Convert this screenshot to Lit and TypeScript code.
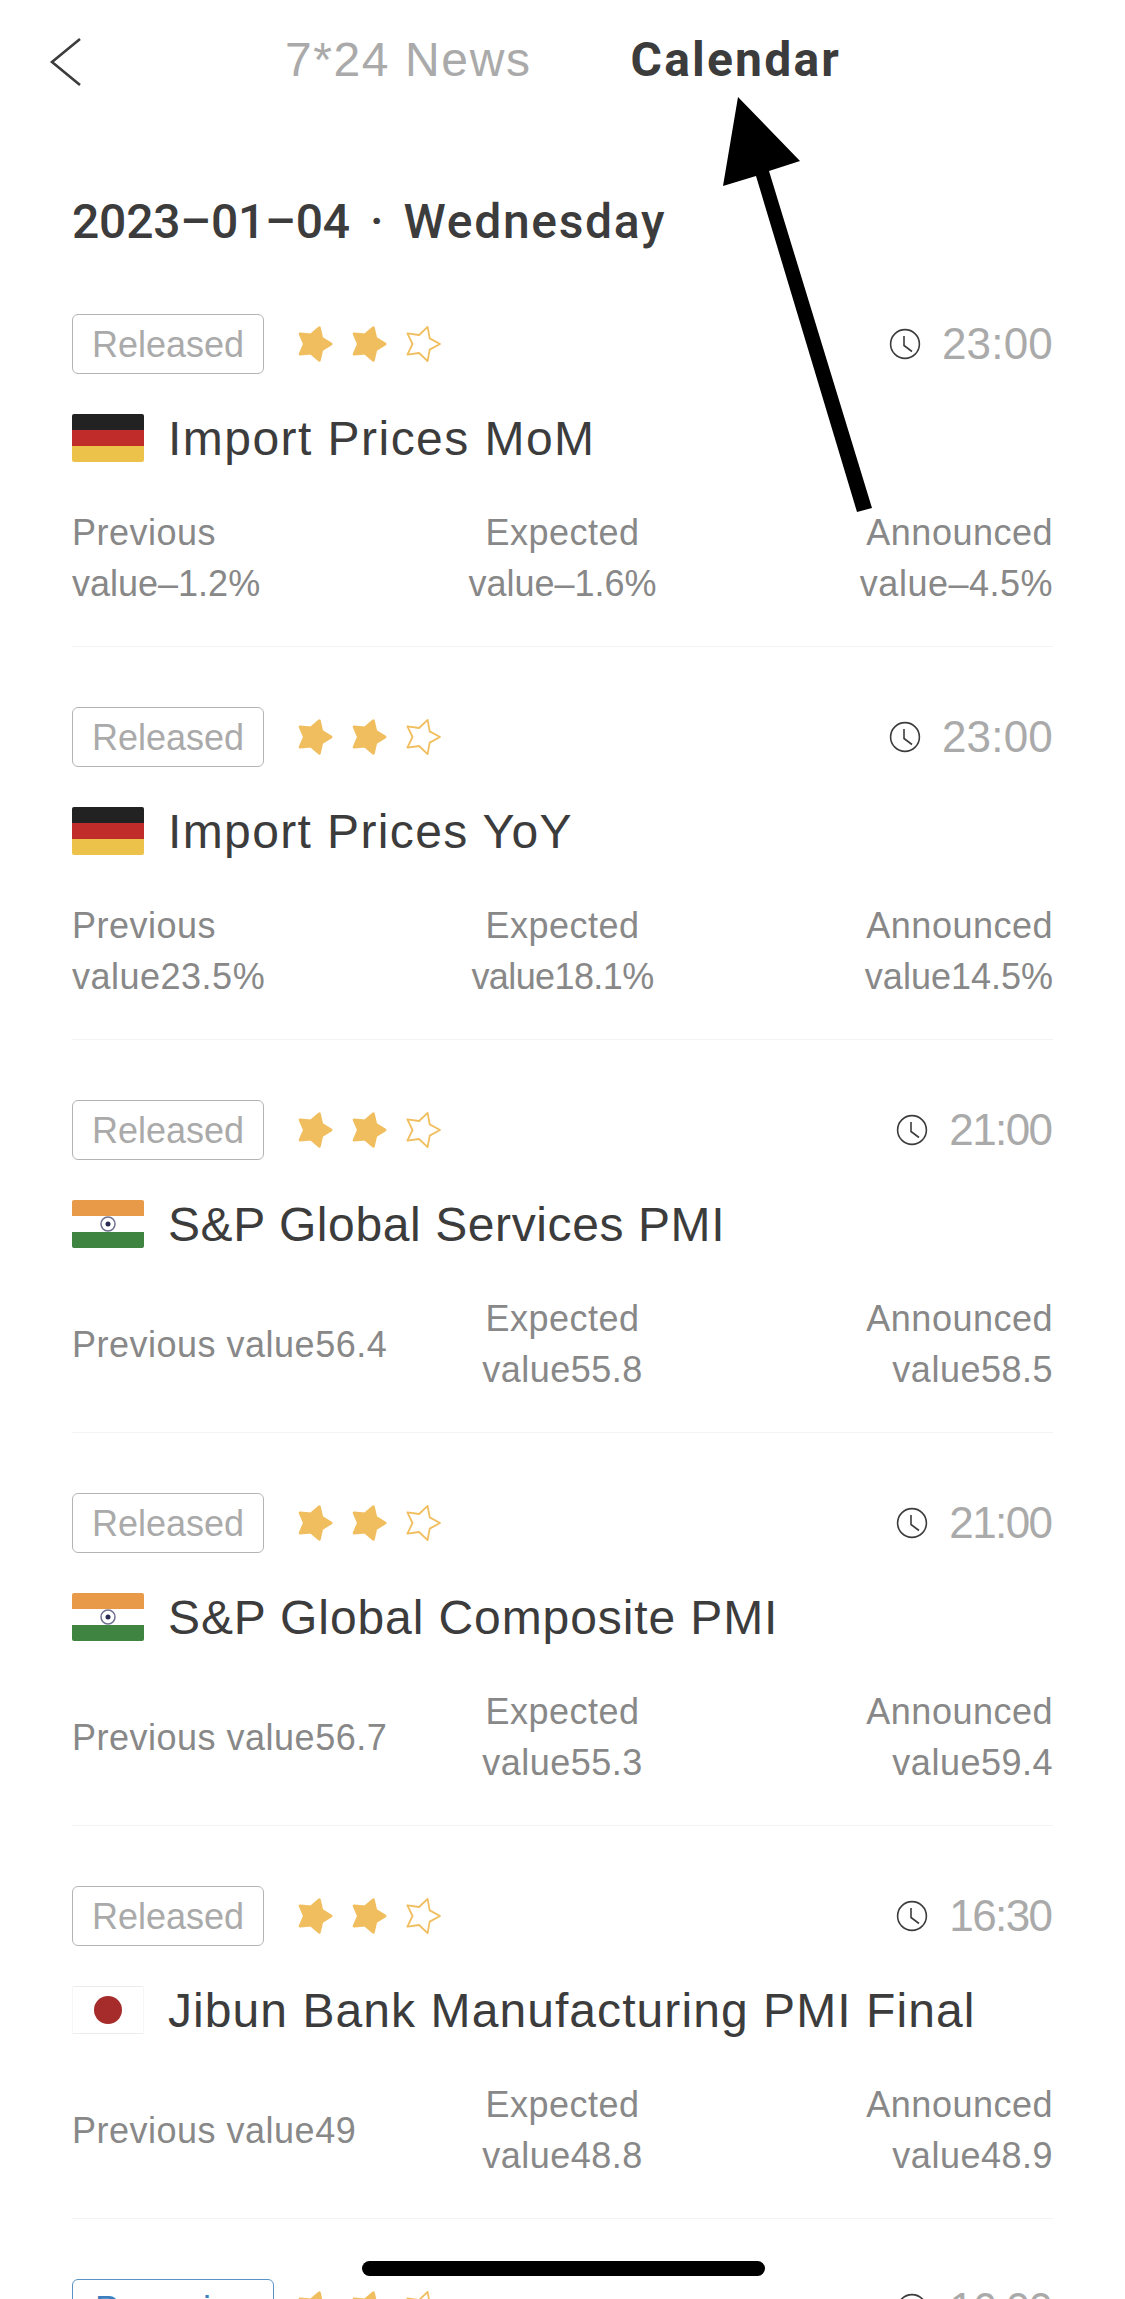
import { LitElement, html, css, svg } from "lit";
import { customElement } from "lit/decorators.js";

type Item = { time: string; flag: string; title: string; sp: number; prev: string[]; exp: string[]; ann: string[]; tag?: string };

const items: Item[] = [
  { time: "23:00", flag: "de", title: "Import Prices MoM", sp: 1.46, prev: ["Previous", "value–1.2%"], exp: ["Expected", "value–1.6%"], ann: ["Announced", "value–4.5%"] },
  { time: "23:00", flag: "de", title: "Import Prices YoY", sp: 1.38, prev: ["Previous", "value23.5%"], exp: ["Expected", "value18.1%"], ann: ["Announced", "value14.5%"] },
  { time: "21:00", flag: "in", title: "S&P Global Services PMI", sp: 0.6, prev: ["Previous value56.4"], exp: ["Expected", "value55.8"], ann: ["Announced", "value58.5"] },
  { time: "21:00", flag: "in", title: "S&P Global Composite PMI", sp: 0.9, prev: ["Previous value56.7"], exp: ["Expected", "value55.3"], ann: ["Announced", "value59.4"] },
  { time: "16:30", flag: "jp", title: "Jibun Bank Manufacturing PMI Final", sp: 1.07, prev: ["Previous value49"], exp: ["Expected", "value48.8"], ann: ["Announced", "value48.9"] },
  { time: "16:00", flag: "jp", title: "", sp: 0, prev: [], exp: [], ann: [], tag: "Preparing" },
];

const starPoints = (r: number, inner: number) => {
  const pts: string[] = [];
  for (let i = 0; i < 10; i++) {
    const rad = i % 2 === 0 ? r : inner;
    const a = (i * 36 * Math.PI) / 180;
    pts.push(`${(20 + rad * Math.cos(a)).toFixed(1)},${(20 + rad * Math.sin(a)).toFixed(1)}`);
  }
  return pts.join(" ");
};

const ones = (t: string) => t.split("1").length - 1;

@customElement("app-root")
export class AppRoot extends LitElement {
  static styles = css`
    :host {
      display: block;
      position: relative;
      width: 1125px;
      height: 2299px;
      overflow: hidden;
      background: #fff;
      font-family: "Liberation Sans", Arial, sans-serif;
      color: #3c3c3c;
    }
    .nav {
      height: 120px;
      display: flex;
      align-items: center;
    }
    .back {
      width: 285px;
      flex: none;
      padding: 4px 0 0 49px;
      box-sizing: border-box;
      display: flex;
    }
    .tab {
      font-size: 48px;
      line-height: 60px;
      letter-spacing: 1.6px;
      color: #aaa;
    }
    .tab.on {
      margin-left: 99px;
      font-family: Roboto, sans-serif;
      font-weight: 700;
      color: #3c3c3c;
      letter-spacing: 2.2px;
    }
    .date {
      display: flex;
      gap: 20px;
      margin: 72px 72px 0;
      font-family: Roboto, sans-serif;
      font-size: 48px;
      font-weight: 500;
      line-height: 60px;
      color: #3c3c3c;
    }
    .date .d {
      letter-spacing: -0.2px;
    }
    .date .w {
      letter-spacing: 1.7px;
    }
    .list {
      padding: 2px 72px 0;
    }
    .item {
      height: 393px;
      box-sizing: border-box;
      border-bottom: 1px solid #f3f3f3;
      padding-top: 60px;
    }
    .top {
      display: flex;
      align-items: center;
      height: 60px;
    }
    .tag {
      box-sizing: border-box;
      height: 60px;
      width: 192px;
      padding-top: 2px;
      border: 1.5px solid #b4b4b4;
      border-radius: 6px;
      display: flex;
      align-items: center;
      justify-content: center;
      font-size: 36px;
      color: #aaa;
    }
    .tag.blue {
      border-color: #5a93c4;
      color: #3d7fc0;
      width: 202px;
    }
    .stars {
      display: flex;
      gap: 14px;
      margin-left: 30px;
    }
    .tag.blue + .stars {
      margin-left: 20px;
    }
    .stars svg {
      display: block;
    }
    .time {
      margin-left: auto;
      display: flex;
      align-items: center;
      gap: 21px;
      font-size: 44px;
      color: #aaa;
    }
    .title-row {
      display: flex;
      align-items: center;
      margin-top: 39px;
      height: 50px;
      font-size: 48px;
      color: #3c3c3c;
      white-space: nowrap;
    }
    .flag {
      display: block;
      flex: none;
      margin-right: 24px;
    }
    .vals {
      display: grid;
      grid-template-columns: 1fr auto 1fr;
      align-items: center;
      margin-top: 44px;
      font-size: 36px;
      line-height: 51px;
      color: #888;
    }
    .vals .c {
      text-align: center;
    }
    .vals .r {
      text-align: right;
    }
    .line {
      display: block;
    }
    .arrow {
      position: absolute;
      left: 0;
      top: 0;
      pointer-events: none;
    }
    .home {
      position: absolute;
      left: 362px;
      top: 2261px;
      width: 403px;
      height: 15px;
      border-radius: 8px;
      background: #000;
    }
  `;

  private star(filled: boolean) {
    return html`<svg width="40" height="40" viewBox="0 0 40 40">
      <polygon
        points=${filled ? starPoints(17, 9.5) : starPoints(18, 9.5)}
        fill=${filled ? "#f0be5e" : "#fff"}
        stroke="#f0be5e"
        stroke-width=${filled ? 3 : 1.8}
        stroke-linejoin="round"
      ></polygon>
    </svg>`;
  }

  private flag(kind: string) {
    let body;
    if (kind === "de") {
      body = svg`<rect width="72" height="16" fill="#222"/><rect y="16" width="72" height="16" fill="#c02c2a"/><rect y="32" width="72" height="16" fill="#ecc24a"/>`;
    } else if (kind === "in") {
      body = svg`<rect width="72" height="16" fill="#e89a48"/><rect y="32" width="72" height="16" fill="#3f8440"/><circle cx="36" cy="24" r="7" fill="#fff" stroke="#6f6f90" stroke-width="1.5"/><circle cx="36" cy="24" r="2.5" fill="#2b2b55"/>`;
    } else {
      body = svg`<rect x="0" y="0.5" width="72" height="47" fill="#fff" stroke="#ececec"/><circle cx="36" cy="24" r="14" fill="#a52c2a"/>`;
    }
    return html`<svg class="flag" width="72" height="48" viewBox="0 0 72 48">
      <defs><clipPath id="fc"><rect width="72" height="48" rx="2"></rect></clipPath></defs>
      <g clip-path="url(#fc)">${body}</g>
    </svg>`;
  }

  private clock() {
    return html`<svg width="32" height="32" viewBox="0 0 32 32" fill="none" stroke="#3c3c3c" stroke-width="1.6">
      <circle cx="16" cy="16" r="14.4"></circle>
      <path d="M15 8 V17.5 L23 23.5"></path>
    </svg>`;
  }

  private lines(l: string[]) {
    return l.map((t) => {
      const n = ones(t);
      const sp = n === 0 ? 0.5 : n === 1 ? 0 : -0.6;
      return html`<span class="line" style="letter-spacing:${sp}px">${t}</span>`;
    });
  }

  render() {
    return html`
      <div class="nav">
        <div class="back">
          <svg width="36" height="50" viewBox="0 0 36 50" fill="none" stroke="#3c3c3c" stroke-width="2.6">
            <path d="M31 2 L3 25 L31 48"></path>
          </svg>
        </div>
        <div class="tab">7*24 News</div>
        <div class="tab on">Calendar</div>
      </div>
      <div class="date"><span class="d">2023–01–04</span><span>·</span><span class="w">Wednesday</span></div>
      <div class="list">
        ${items.map((it) => {
          const narrow = ones(it.time) > 0;
          return html`<div class="item">
            <div class="top">
              <div class="tag ${it.tag ? "blue" : ""}">${it.tag ?? "Released"}</div>
              <div class="stars">${this.star(true)}${this.star(true)}${this.star(false)}</div>
              <div class="time" style="letter-spacing:${narrow ? -1.6 : 0.2}px;margin-right:${narrow ? 1.6 : 0}px">
                ${this.clock()}${it.time}
              </div>
            </div>
            <div class="title-row" style="letter-spacing:${it.sp}px">${this.flag(it.flag)}${it.title}</div>
            <div class="vals">
              <div>${this.lines(it.prev)}</div>
              <div class="c">${this.lines(it.exp)}</div>
              <div class="r">${this.lines(it.ann)}</div>
            </div>
          </div>`;
        })}
      </div>
      <svg class="arrow" width="1125" height="520" viewBox="0 0 1125 520">
        <polygon points="738,97 800,161 769,171 872,508 857,512 756,176 723,186" fill="#000"></polygon>
      </svg>
      <div class="home"></div>
    `;
  }
}
